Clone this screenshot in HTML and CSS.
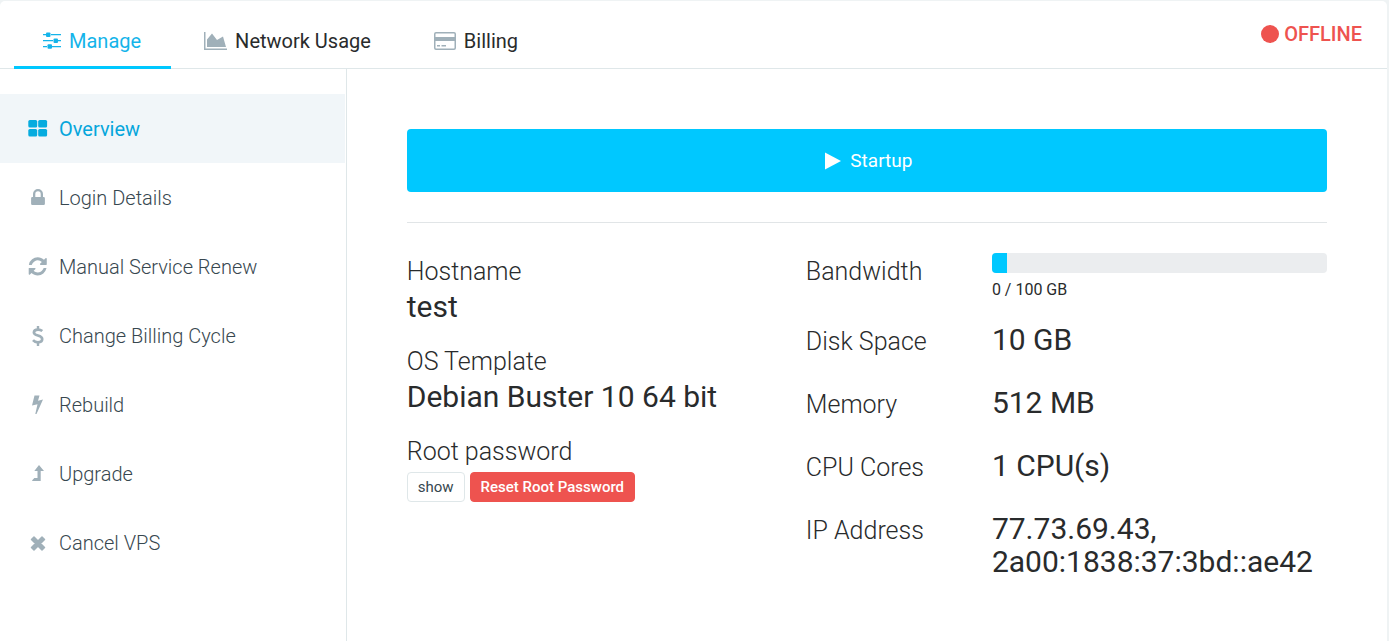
FILE: index.html
```html
<!DOCTYPE html>
<html lang="en">
<head>
<meta charset="utf-8">
<title>Manage VPS</title>
<link rel="stylesheet" href="styles.css">
</head>
<body>
<div class="panel">
  <header class="panel-head">
    <nav class="tabs" aria-label="Service">
      <a class="tab tab-active" href="#manage" aria-current="page">
        <svg class="tab-icon" width="18" height="18" viewBox="0 0 18 18" fill="currentColor" aria-hidden="true"><path d="M0 2h3v1.300H0zM8 2h10v1.300H8zM0 8h10v1.300H0zM15 8h3v1.300h-3zM0 14h4v1.300H0zM9 14h9v1.300H9z"/><rect x="3" y="0.500" width="4.500" height="4.500" rx="1"/><rect x="10.500" y="6.500" width="4.500" height="4.500" rx="1"/><rect x="4.500" y="12.300" width="4.500" height="4.500" rx="1"/></svg>
        Manage
      </a>
      <a class="tab" href="#network">
        <svg class="tab-icon" width="23" height="18" viewBox="0 0 23 18" fill="currentColor" aria-hidden="true"><path d="M0 0h1.500v16.500H23V18H0zM3 15V7.500L8 1.500l5 6.500 6-3.500L22 15z"/></svg>
        Network Usage
      </a>
      <a class="tab" href="#billing">
        <svg class="tab-icon" width="22" height="18" viewBox="0 0 22 18" fill="currentColor" aria-hidden="true"><path fill-rule="evenodd" d="M2 0h18a2 2 0 0 1 2 2v14a2 2 0 0 1-2 2H2a2 2 0 0 1-2-2V2a2 2 0 0 1 2-2zM2 1.500a.5.500 0 0 0-.5.500v3h19V2a.5.500 0 0 0-.5-.5zM1.500 9v7c0 .3.200.5.500.5h18c.3 0 .5-.2.500-.5V9z"/><path d="M3 13h3v1.500H3zM7.500 13H12v1.500H7.500z"/></svg>
        Billing
      </a>
    </nav>
    <div class="status"><span class="status-dot"></span>OFFLINE</div>
  </header>
  <div class="panel-body">
    <nav class="side" aria-label="Manage">
      <a class="side-item side-item-active" href="#overview" aria-current="page">
        <svg class="side-icon" width="20" height="20" viewBox="0 0 20 20" fill="currentColor" aria-hidden="true"><rect x="0.300" y="1" width="8.900" height="7.500" rx="1.500"/><rect x="10.200" y="1" width="8.900" height="7.500" rx="1.500"/><rect x="0.300" y="10" width="8.900" height="7.500" rx="1.500"/><rect x="10.200" y="10" width="8.900" height="7.500" rx="1.500"/></svg>
        Overview
      </a>
      <a class="side-item" href="#login">
        <svg class="side-icon" width="20" height="20" viewBox="0 0 20 20" fill="currentColor" aria-hidden="true"><path fill-rule="evenodd" d="M5 9V6a5 5 0 0 1 10 0v3h.7a1.200 1.200 0 0 1 1.200 1.200v5.600a1.200 1.200 0 0 1-1.200 1.200H4.300a1.200 1.200 0 0 1-1.200-1.200v-5.600A1.200 1.200 0 0 1 4.300 9zM7.300 9h5.400V6a2.700 2.700 0 0 0-5.400 0z"/></svg>
        Login Details
      </a>
      <a class="side-item" href="#renew">
        <svg class="side-icon" width="20" height="20" viewBox="-60 -30 1700 1700" fill="currentColor" aria-hidden="true"><path d="M1511 928q0 5-1 7-64 268-268 434.500T764 1536q-146 0-282.500-55T238 1324l-129 129q-19 19-45 19t-45-19-19-45V960q0-26 19-45t45-19h448q26 0 45 19t19 45-19 45l-137 137q71 66 161 102t187 36q134 0 250-65t186-179q11-17 53-117 8-23 30-23h192q13 0 22.500 9.500t9.500 22.500zM1536 128v448q0 26-19 45t-45 19h-448q-26 0-45-19t-19-45 19-45l138-138Q969 256 768 256q-134 0-250 65T332 500q-11 17-53 117-8 23-30 23H50q-13 0-22.500-9.500T18 608v-7q65-268 270-434.500T768 0q146 0 284 55.500T1297 212l130-129q19-19 45-19t45 19 19 45z"/></svg>
        Manual Service Renew
      </a>
      <a class="side-item" href="#cycle">
        <svg class="side-icon" width="20" height="20" viewBox="0 0 20 20" fill="none" stroke="currentColor" aria-hidden="true"><path stroke-width="2.700" d="M14.300 5C13.200 4.100 11.900 3.600 10 3.600 7.300 3.600 5.900 4.800 5.900 6.500 5.900 10.400 14.200 8.700 14.200 13c0 2.100-1.800 3.300-4.300 3.300-2 0-3.700-.8-4.900-2.100"/><path stroke-width="2.400" d="M10 0v4M10 16v4"/></svg>
        Change Billing Cycle
      </a>
      <a class="side-item" href="#rebuild">
        <svg class="side-icon" width="20" height="20" viewBox="0 0 20 20" fill="currentColor" aria-hidden="true"><path d="M6.500 0.500h5L10 5.800l5-1.200L8.500 19H7.300l2.200-9.700-5.500 1.200z"/></svg>
        Rebuild
      </a>
      <a class="side-item" href="#upgrade">
        <svg class="side-icon" width="20" height="20" viewBox="0 0 20 20" fill="currentColor" aria-hidden="true"><path d="M11 1l5 6h-3.300v10H4.500L4 16.500 6.300 14H9.500V7H6.300z"/></svg>
        Upgrade
      </a>
      <a class="side-item" href="#cancel">
        <svg class="side-icon" width="20" height="20" viewBox="0 0 20 20" fill="currentColor" stroke="currentColor" stroke-width="1.500" stroke-linejoin="round" aria-hidden="true"><path d="M6 4l4 4 4-4 2.500 2.500-4 4 4 4L14 17l-4-4-4 4-2.500-2.500 4-4-4-4z"/></svg>
        Cancel VPS
      </a>
    </nav>
    <main class="main">
      <button class="startup" type="button">
        <svg width="16" height="18" viewBox="0 0 16 18" fill="currentColor" aria-hidden="true"><path d="M0 0.500L16 9 0 17.500z"/></svg>
        Startup
      </button>
      <div class="details">
        <dl class="facts">
          <div><dt class="label">Hostname</dt><dd class="value">test</dd></div>
          <div><dt class="label">OS Template</dt><dd class="value">Debian Buster 10 64 bit</dd></div>
          <div>
            <dt class="label">Root password</dt>
            <dd class="actions"><button class="btn" type="button">show</button><button class="btn btn-danger" type="button">Reset Root Password</button></dd>
          </div>
        </dl>
        <dl class="specs">
          <div class="spec">
            <dt class="label">Bandwidth</dt>
            <dd class="usage"><div class="bar" role="progressbar" aria-label="Bandwidth" aria-valuenow="0" aria-valuemin="0" aria-valuemax="100"><div class="bar-fill"></div></div><div class="usage-text">0 / 100 GB</div></dd>
          </div>
          <div class="spec"><dt class="label">Disk Space</dt><dd class="value">10 GB</dd></div>
          <div class="spec"><dt class="label">Memory</dt><dd class="value">512 MB</dd></div>
          <div class="spec"><dt class="label">CPU Cores</dt><dd class="value">1 CPU(s)</dd></div>
          <div class="spec"><dt class="label">IP Address</dt><dd class="value">77.73.69.43, 2a00:1838:37:3bd::ae42</dd></div>
        </dl>
      </div>
    </main>
  </div>
</div>
</body>
</html>
```
FILE: styles.css
```css
* { box-sizing: border-box; }

body {
  margin: 0;
  padding: 1px 2px 0 0;
  background: #eff3f4;
  color: #292b2c;
  font-family: Roboto, "Liberation Sans", sans-serif;
}

.panel {
  display: flex;
  flex-direction: column;
  min-height: calc(100vh - 1px);
  background: #fff;
  border-radius: 5px 5px 0 0;
}

.panel-head {
  display: flex;
  justify-content: space-between;
  padding: 0 25px 0 14px;
  border-bottom: 1px solid #dfe7e9;
}

.tabs { display: flex; gap: 4px; margin-bottom: -1px; }

.tab {
  display: flex;
  align-items: center;
  gap: 8px;
  padding: 28px 30px 13px 29px;
  border-bottom: 3px solid transparent;
  color: #292b2c;
  font-size: 20px;
  line-height: 24px;
  text-decoration: none;
}
.tab-icon { color: #a0b0b9; }
.tab-active { border-color: #00c8ff; color: #14b4ea; }
.tab-active .tab-icon { color: inherit; }

.status {
  display: flex;
  align-items: center;
  gap: 5px;
  height: 66px;
  color: #ee534f;
  font-size: 20px;
  font-weight: 500;
}
.status-dot { width: 18px; height: 18px; border-radius: 50%; background: currentColor; }

.panel-body { display: flex; flex: 1; }

.side {
  flex: 0 0 25%;
  padding: 25px 1px 25px 0;
  border-right: 1px solid #dfe7e9;
}
.side-item {
  display: flex;
  align-items: center;
  gap: 11px;
  height: 69px;
  padding-left: 28px;
  color: #37474f;
  font-size: 20px;
  font-weight: 300;
  text-decoration: none;
}
.side-item-active { background: #f1f6f9; color: #06a6dc; font-weight: 400; }
.side-icon { color: #a0b0b9; }
.side-item-active .side-icon { color: #06acdf; }

.main { flex: 1; min-width: 0; padding: 60px; }

.startup {
  display: flex;
  align-items: center;
  justify-content: center;
  gap: 9px;
  width: 100%;
  height: 63px;
  padding: 0 0 0 4px;
  border: 0;
  border-radius: 4px;
  background: #00c8ff;
  color: #fff;
  font: 400 19px/24px Roboto, "Liberation Sans", sans-serif;
}

.details {
  display: grid;
  grid-template-columns: 399fr 521fr;
  margin-top: 30px;
  padding-top: 30px;
  border-top: 1px solid #e1e5e7;
}

dl, dd { margin: 0; }

.label { font-size: 25px; font-weight: 300; line-height: 37px; }
.value { font-size: 30px; line-height: 33px; }

.facts { display: flex; flex-direction: column; gap: 20px; }
.actions { display: flex; gap: 5px; padding-top: 2px; }

.btn {
  height: 30px;
  padding: 0 10px;
  border: 1px solid #dfe7e9;
  border-radius: 4px;
  background: #fff;
  color: #37474f;
  font: 400 15px/20px Roboto, "Liberation Sans", sans-serif;
}
.btn-danger { border-color: #ee534f; background: #ee534f; color: #fff; font-weight: 500; }

.specs { display: flex; flex-direction: column; gap: 30px; }
.spec { display: grid; grid-template-columns: 186fr 335fr; align-items: start; }
.spec .label { margin-bottom: -4px; }

.bar { height: 20px; overflow: hidden; border-radius: 4px; background: #ebedef; }
.bar-fill { width: 15px; height: 100%; background: #00c8ff; }
.usage-text { padding-top: 7px; font-size: 16px; line-height: 20px; }
.usage { height: 40px; }
```
